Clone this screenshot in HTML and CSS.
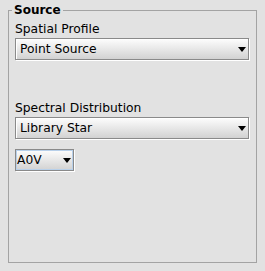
FILE: index.html
```html
<!DOCTYPE html>
<html>
<head>
<meta charset="utf-8">
<link rel="stylesheet" href="styles.css">
</head>
<body>
<fieldset class="panel">
  <legend class="panel-title">Source</legend>
  <div class="field-label">Spatial Profile</div>
  <div class="combo combo-wide"><span class="combo-text">Point Source</span><span class="combo-arrow"></span></div>
  <div class="field-label label-spaced">Spectral Distribution</div>
  <div class="combo combo-wide"><span class="combo-text">Library Star</span><span class="combo-arrow"></span></div>
  <div class="combo combo-small combo-focus"><span class="combo-text">A0V</span><span class="combo-arrow"></span></div>
</fieldset>
</body>
</html>
```
FILE: styles.css
```css
html, body {
  margin: 0;
  padding: 0;
  background: #e2e2e2;
  font-family: "DejaVu Sans", sans-serif;
  font-size: 12.3px;
  color: #000;
}

.panel {
  margin: 3px 8px 0 8px;
  padding: 0 7px 0 6px;
  border: 1px solid #a3a3a3;
  height: 258px;
  box-sizing: content-box;
  width: 234px;
}

.panel-title {
  font-weight: bold;
  font-size: 12px;
  padding: 0 2px;
  margin-left: -3px;
  line-height: 14px;
}

.field-label {
  line-height: 15px;
  height: 15px;
  margin-top: 5px;
}

.label-spaced {
  margin-top: 41px;
}

.combo {
  box-sizing: border-box;
  height: 22px;
  margin-top: 1px;
  border: 1px solid #8a8a8a;
  background: linear-gradient(#fdfdfd, #d2d2d2);
  box-shadow: 1px 1px 0 #ffffff, inset 1px 1px 0 #ffffff;
  display: flex;
  align-items: center;
  justify-content: space-between;
  padding: 0 2px 0 4px;
}

.combo-wide {
  width: 234px;
}

.combo + .combo {
  margin-top: 10px;
}

.combo-small {
  width: 59px;
  padding-left: 1px;
}

.combo-focus {
  box-shadow: 1px 1px 0 #ffffff, inset 0 0 0 1px #b8d0ea;
}

.combo-text {
  line-height: 15px;
}

.combo-arrow {
  width: 0;
  height: 0;
  border-left: 4.5px solid transparent;
  border-right: 4.5px solid transparent;
  border-top: 5px solid #000;
  margin-top: 1px;
}
```
